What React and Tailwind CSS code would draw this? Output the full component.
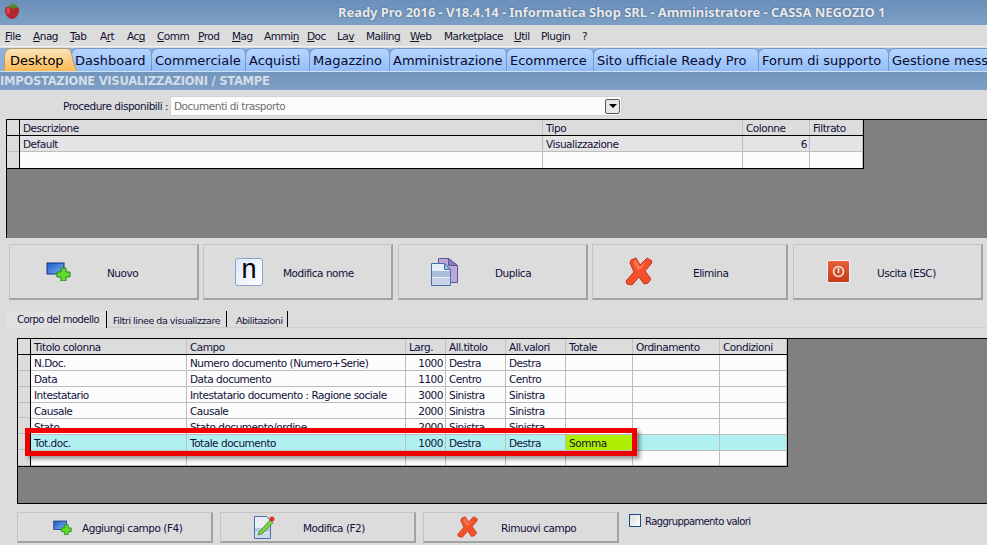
// [before, underlined, after, width]
const menus = [
  ['', 'F', 'ile', 28], ['', 'A', 'nag', 37], ['', 'T', 'ab', 30], ['A', 'r', 't', 27], ['Ac', 'q', '', 30], ['', 'C', 'omm', 41], ['', 'P', 'rod', 34],
  ['', 'M', 'ag', 32], ['Ammi', 'n', '', 43], ['', 'D', 'oc', 30], ['La', 'v', '', 29], ['Mailin', 'g', '', 44], ['', 'W', 'eb', 34], ['Marke', 't', 'place', 70], ['', 'U', 'til', 27], ['Plugin', '', '', 41], ['?', '', '', 10],
];

const tabs = [
  ['Desktop', 67], ['Dashboard', 80], ['Commerciale', 94], ['Acquisti', 64], ['Magazzino', 80],
  ['Amministrazione', 117], ['Ecommerce', 87], ['Sito ufficiale Ready Pro', 165], ['Forum di supporto', 130], ['Gestione messaggi', 130],
];

const fieldRows = [
  ['N.Doc.', 'Numero documento (Numero+Serie)', '1000', 'Destra', 'Destra', ''],
  ['Data', 'Data documento', '1100', 'Centro', 'Centro', ''],
  ['Intestatario', 'Intestatario documento : Ragione sociale', '3000', 'Sinistra', 'Sinistra', ''],
  ['Causale', 'Causale', '2000', 'Sinistra', 'Sinistra', ''],
  ['Stato', 'Stato documento/ordine', '2000', 'Sinistra', 'Sinistra', ''],
  ['Tot.doc.', 'Totale documento', '1000', 'Destra', 'Destra', 'Somma'],
  ['', '', '', '', '', ''],
];

function Strawberry() {
  return (
    <svg width="16" height="18" viewBox="0 0 16 18">
      <path d="M1 7c1-3 4-3 7-3s6 0 7 3c1 4-3 10-7 10S0 11 1 7z" fill="#b5252c" />
      <path d="M3 6c2-1 3 0 3 3s-2 4-3 2-1-4 0-5z" fill="#d8474a" />
      <path d="M3 5l3-1-1-2 3 1 1-3 1 3 3-1-1 2 3 1-4 1-2 1-2-1z" fill="#4f8a2e" />
    </svg>
  );
}

function AddIcon({ small }) {
  const w = small ? 19 : 25;
  return (
    <svg width={w} height={small ? 15 : 19} viewBox="0 0 25 19">
      <defs>
        <linearGradient id="addBlue" x1="0" y1="0" x2="1" y2="1">
          <stop offset="0" stopColor="#1c5cc8" />
          <stop offset="1" stopColor="#7fb0ee" />
        </linearGradient>
      </defs>
      <rect x="1" y="1" width="17" height="11" fill="url(#addBlue)" stroke="#13307e" strokeWidth="1" />
      <path d="M15 6h5v4h4v5h-4v4h-5v-4h-4v-5h4z" fill="#63d82e" stroke="#1a8a12" strokeWidth="1" />
    </svg>
  );
}

function NameIcon() {
  return (
    <div className="w-[28px] h-[28px] rounded-[3px] border border-[#8ea2cf] bg-gradient-to-br from-[#d9e8fb] to-white flex items-center justify-center text-[27px] leading-none tracking-normal text-black pb-[5px] font-['Liberation_Sans',sans-serif]">
      n
    </div>
  );
}

function CopyIcon() {
  return (
    <svg width="29" height="30" viewBox="0 0 29 30">
      <path d="M8.5 1.5h10l9 7v17h-19z" fill="#b9a8d8" stroke="#5a5a94" />
      <path d="M18.5 1.5l9 7h-9z" fill="#8f77bd" stroke="#5a5a94" />
      <path d="M1.5 6.500h13l6 6v16h-19z" fill="#e6eef9" stroke="#4a6da5" />
      <path d="M14.500 6.500l6 6h-6z" fill="#8fc0e8" stroke="#4a6da5" />
      <rect x="2" y="14" width="18" height="6" fill="#a8bcdc" />
      <rect x="2" y="21" width="18" height="7" fill="#c6d3e8" />
    </svg>
  );
}

function CrossIcon({ size = 29 }) {
  return (
    <svg width={size} height={size} viewBox="0 0 29 29">
      <path d="M5 6l1-3 5-2 4 7 7-7 5 3-1 3-6 7 6 8-3 4-4 1-5-7-7 8-5-1-1-3 8-9z" fill="#f4512a" stroke="#c8321a" strokeWidth="1" strokeLinejoin="round" />
      <path d="M8 5l3-2 4 7 6-6-5 8-3 1z" fill="#fa7a50" />
    </svg>
  );
}

function PowerIcon() {
  return (
    <div className="w-[23px] h-[23px] rounded-[2px] bg-gradient-to-b from-[#e8603a] to-[#c23a16] flex items-center justify-center border border-[#f0f0f0]">
      <svg width="13" height="13" viewBox="0 0 13 13">
        <circle cx="6.500" cy="6.500" r="5" fill="none" stroke="#f6e4dc" strokeWidth="1.600" />
        <rect x="5.700" y="3" width="1.600" height="5" fill="#f6e4dc" />
      </svg>
    </div>
  );
}

function EditIcon() {
  return (
    <svg width="21" height="23" viewBox="0 0 21 23">
      <path d="M0.500 0.500h12l4 4v18h-16z" fill="#e8eef8" stroke="#4a6da5" />
      <rect x="1" y="12" width="15" height="4" fill="#b9c9e2" />
      <rect x="1" y="17" width="15" height="5" fill="#cfd9ea" />
      <path d="M5 16l11-12 3 3-11 11-4 1z" fill="#7ccf4a" stroke="#3f8a28" strokeWidth="0.800" />
      <circle cx="18" cy="3" r="2.500" fill="#d9342a" />
    </svg>
  );
}

// raised windows style button, iconClass sets the slot before the label
function Button({ className, icon, iconClass, label }) {
  return (
    <button className={`h-full flex items-center bg-[#dcdcdc] border border-[#c4c4c4] border-r-2 border-b-2 border-r-[#a2a2a2] border-b-[#a2a2a2] text-[#10103a] ${className}`}>
      <span className={`shrink-0 flex items-center ${iconClass}`}>{icon}</span>
      <span className="whitespace-nowrap pt-[2px]">{label}</span>
    </button>
  );
}

function Tab({ label, width, active }) {
  return (
    <div className="flex shrink-0 h-[24px] -mr-[7px] relative" style={{ width: width + 7, zIndex: active ? 20 : 1 }}>
      <div className={`flex-1 min-w-0 h-full rounded-tl-[7px] border-t border-l text-[13px] leading-[24px] whitespace-nowrap ${active ? 'pl-[5px] border-[#b89a6a] bg-gradient-to-b from-[#f8e4bc] to-[#fdb84a] text-black' : 'pl-[3px] border-[#6f9ad0] bg-gradient-to-b from-[#b8d6fc] to-[#90bcf8] text-[#08082e]'}`}>
        <span className="relative z-10">{label}</span>
      </div>
      <svg width="12" height="24" viewBox="0 0 12 24" className="shrink-0">
        <defs>
          <linearGradient id={active ? 'tailOn' : 'tailOff'} x1="0" y1="0" x2="0" y2="1">
            <stop offset="0" stopColor={active ? '#f8e4bc' : '#b8d6fc'} />
            <stop offset="1" stopColor={active ? '#fdb84a' : '#90bcf8'} />
          </linearGradient>
        </defs>
        <path d="M0 0.500C4 0.500 5 3 6 8c1 6 3 13 6 16H0z" fill={`url(#${active ? 'tailOn' : 'tailOff'})`} />
        <path d="M0 0.500C4 0.500 5 3 6 8c1 6 3 13 6 16" fill="none" stroke={active ? '#b89a6a' : '#6f9ad0'} />
      </svg>
    </div>
  );
}

function HeaderCell({ w, children }) {
  return (
    <div className="h-full shrink-0 border-r border-[#c2c2c2] pl-[3px] pt-[1px] whitespace-nowrap overflow-hidden" style={{ width: w }}>
      {children}
    </div>
  );
}

function Cell({ w, right, className = '', children }) {
  return (
    <div className={`h-full shrink-0 border-r border-[#bdbdbd] pl-[3px] pr-[2px] pt-[1px] whitespace-nowrap overflow-hidden ${right ? 'text-right' : ''} ${className}`} style={{ width: w }}>
      {children}
    </div>
  );
}

const fieldCols = [156, 219, 40, 60, 60, 67, 87, 67];

export default function App() {
  return (
    <div className="w-[987px] h-[545px] overflow-hidden bg-[#dcdcdc] text-[10.500px] leading-[14px] text-[#10103a] font-['DejaVu_Sans',sans-serif] tracking-[-0.48px]">
      {/* title bar */}
      <div className="h-[25px] flex items-center bg-gradient-to-b from-[#6a8fb9] to-[#7ea0c6]">
        <span className="ml-[4px] mt-[-4px]"><Strawberry /></span>
        <span className="ml-[318px] mt-[-1px] text-[13px] leading-[16px] font-bold tracking-[-0.05px] text-[#e8e8e8] whitespace-nowrap [text-shadow:0_0_2px_#3d5a80] font-['Noto_Sans',sans-serif]">
          Ready Pro 2016 - V18.4.14 - Informatica Shop SRL - Amministratore - CASSA NEGOZIO 1
        </span>
      </div>

      {/* menu */}
      <div className="h-[21px] flex items-center pl-[5px] text-[#101030]">
        {menus.map((m, i) => (
          <span key={i} className="shrink-0 whitespace-nowrap" style={{ width: m[3] }}>
            {m[0]}<span className="underline">{m[1]}</span>{m[2]}
          </span>
        ))}
      </div>

      {/* main tabs */}
      <div className="h-[26px] border-t border-[#f2f2f2] overflow-hidden bg-[linear-gradient(#dcdcdc_1px,#8dafd8_1px)] border-b border-b-[#d4dfee]">
        <div className="flex pl-[4px] pt-[1px] tracking-normal">
          {tabs.map((t, i) => <Tab key={t[0]} label={t[0]} width={t[1]} active={i === 0} />)}
        </div>
      </div>

      {/* section title */}
      <div className="h-[18px] bg-gradient-to-b from-[#7195bd] to-[#7e9fc5] text-[11.500px] leading-[18px] font-bold tracking-[-0.25px] text-[#d5dde8] whitespace-nowrap">
        IMPOSTAZIONE VISUALIZZAZIONI / STAMPE
      </div>

      {/* procedure combo */}
      <div className="h-[29px] flex items-start pt-[6px] pl-[63px]">
        <span className="w-[107px] pt-[3px] whitespace-nowrap text-[#10103a]">Procedure disponibili :</span>
        <div className="w-[452px] h-[20px] bg-[#fcfcfc] border border-[#d2d2d2] pl-[3px] flex items-center justify-between text-[#6e6e6e]">
          Documenti di trasporto
          <span className="w-[15px] h-[15px] mr-[1px] rounded-[2px] border border-[#555] bg-[#e8e8e8] flex items-center justify-center">
            <span className="w-0 h-0 border-x-[4px] border-x-transparent border-t-[4px] border-t-black" />
          </span>
        </div>
      </div>

      {/* models grid */}
      <div className="ml-[6px] h-[119px] bg-[#808080] border-t border-l border-black">
        <div className="w-[857px] h-[49px] border-r border-b border-black bg-[#fcfcfc] flex">
          <div className="w-[13px] shrink-0 bg-[#dcdcdc] border-r border-black flex flex-col">
            <div className="h-[16px] border-b border-black" />
            <div className="h-[16px] border-b border-[#bdbdbd]" />
            <div className="flex-1" />
          </div>
          <div className="flex-1 flex flex-col">
            <div className="h-[16px] flex bg-[#dcdcdc] border-b border-black">
              <HeaderCell w={523}>Descrizione</HeaderCell>
              <HeaderCell w={200}>Tipo</HeaderCell>
              <HeaderCell w={67}>Colonne</HeaderCell>
              <HeaderCell w={53}>Filtrato</HeaderCell>
            </div>
            <div className="h-[16px] flex bg-[#e4e4e4] border-b border-[#bdbdbd]">
              <Cell w={523}>Default</Cell>
              <Cell w={200}>Visualizzazione</Cell>
              <Cell w={67} right>6</Cell>
              <Cell w={53} />
            </div>
            <div className="flex-1 flex">
              <Cell w={523} /><Cell w={200} /><Cell w={67} /><Cell w={53} />
            </div>
          </div>
        </div>
      </div>

      {/* main buttons */}
      <div className="h-[56px] mt-[6px] ml-[9px] flex">
        <Button className="w-[190px] mr-[4px]" icon={<AddIcon />} iconClass="w-[97px] pl-[36px]" label="Nuovo" />
        <Button className="w-[190px] mr-[5px]" icon={<NameIcon />} iconClass="w-[79px] pl-[31px]" label="Modifica nome" />
        <Button className="w-[190px] mr-[4px]" icon={<CopyIcon />} iconClass="w-[96px] pl-[31px]" label="Duplica" />
        <Button className="w-[196px] mr-[5px]" icon={<CrossIcon />} iconClass="w-[100px] pl-[32px]" label="Elimina" />
        <Button className="w-[190px]" icon={<PowerIcon />} iconClass="w-[83px] pl-[33px]" label="Uscita (ESC)" />
      </div>

      {/* lower tabs */}
      <div className="h-[17px] mt-[11px] ml-[6px] flex border-b border-[#cfcfcf] text-[9.500px] tracking-[-0.46px]">
        <div className="w-[101px] h-[17px] pl-[11px] pt-[2px] bg-[#e0e0e0] border-r border-black text-[10px] tracking-[-0.55px] whitespace-nowrap">Corpo del modello</div>
        <div className="w-[120px] pl-[6px] pt-[3px] border-r border-black whitespace-nowrap">Filtri linee da visualizzare</div>
        <div className="w-[61px] pl-[9px] pt-[3px] border-r border-black whitespace-nowrap">Abilitazioni</div>
      </div>

      {/* fields grid */}
      <div className="relative h-[166px] ml-[17px] mt-[10px] bg-[#808080] border-t border-l border-b border-black">
        <div className="w-[770px] h-[128px] bg-[#fcfcfc] border-r border-b border-black flex">
          <div className="w-[13px] shrink-0 bg-[#dcdcdc] border-r border-black flex flex-col">
            <div className="h-[16px] border-b border-black" />
            {fieldRows.map((r, i) => <div key={i} className="h-[16px] border-b border-[#bdbdbd]" />)}
          </div>
          <div className="flex-1 flex flex-col">
            <div className="h-[16px] flex bg-[#dcdcdc] border-b border-black">
              {['Titolo colonna', 'Campo', 'Larg.', 'All.titolo', 'All.valori', 'Totale', 'Ordinamento', 'Condizioni'].map((h, i) => (
                <HeaderCell key={h} w={fieldCols[i]}>{h}</HeaderCell>
              ))}
            </div>
            {fieldRows.map((r, i) => (
              <div key={i} className={`h-[16px] flex border-b border-[#bdbdbd] ${i === 5 ? 'bg-[#b0f0f0]' : ''}`}>
                <Cell w={fieldCols[0]}>{r[0]}</Cell>
                <Cell w={fieldCols[1]}>{r[1]}</Cell>
                <Cell w={fieldCols[2]} right>{r[2]}</Cell>
                <Cell w={fieldCols[3]}>{r[3]}</Cell>
                <Cell w={fieldCols[4]}>{r[4]}</Cell>
                <Cell w={fieldCols[5]} className={i === 5 ? 'bg-[#aeee00]' : ''}>{r[5]}</Cell>
                <Cell w={fieldCols[6]} />
                <Cell w={fieldCols[7]} />
              </div>
            ))}
          </div>
        </div>
        {/* red highlight around the total row */}
        <div className="absolute left-[7px] top-[89px] w-[612px] h-[28px] border-[5px] border-[#f00000] shadow-[3px_3px_4px_rgba(0,0,0,0.4)]" />
      </div>

      {/* field buttons */}
      <div className="h-[31px] mt-[8px] ml-[17px] flex">
        <Button className="w-[196px] mr-[7px]" icon={<AddIcon small />} iconClass="w-[64px] pl-[35px]" label="Aggiungi campo (F4)" />
        <Button className="w-[196px] mr-[7px]" icon={<EditIcon />} iconClass="w-[82px] pl-[33px]" label="Modifica (F2)" />
        <Button className="w-[196px] mr-[10px]" icon={<CrossIcon size={22} />} iconClass="w-[77px] pl-[33px]" label="Rimuovi campo" />
        <div className="flex items-start pt-[2px]">
          <span className="w-[12px] h-[13px] mr-[4px] border border-[#1c4f86] bg-gradient-to-br from-[#dcdcdc] to-white" />
          <span className="whitespace-nowrap text-[10px] leading-[13px] mt-[1px] tracking-[-0.6px]">Raggruppamento valori</span>
        </div>
      </div>
    </div>
  );
}
